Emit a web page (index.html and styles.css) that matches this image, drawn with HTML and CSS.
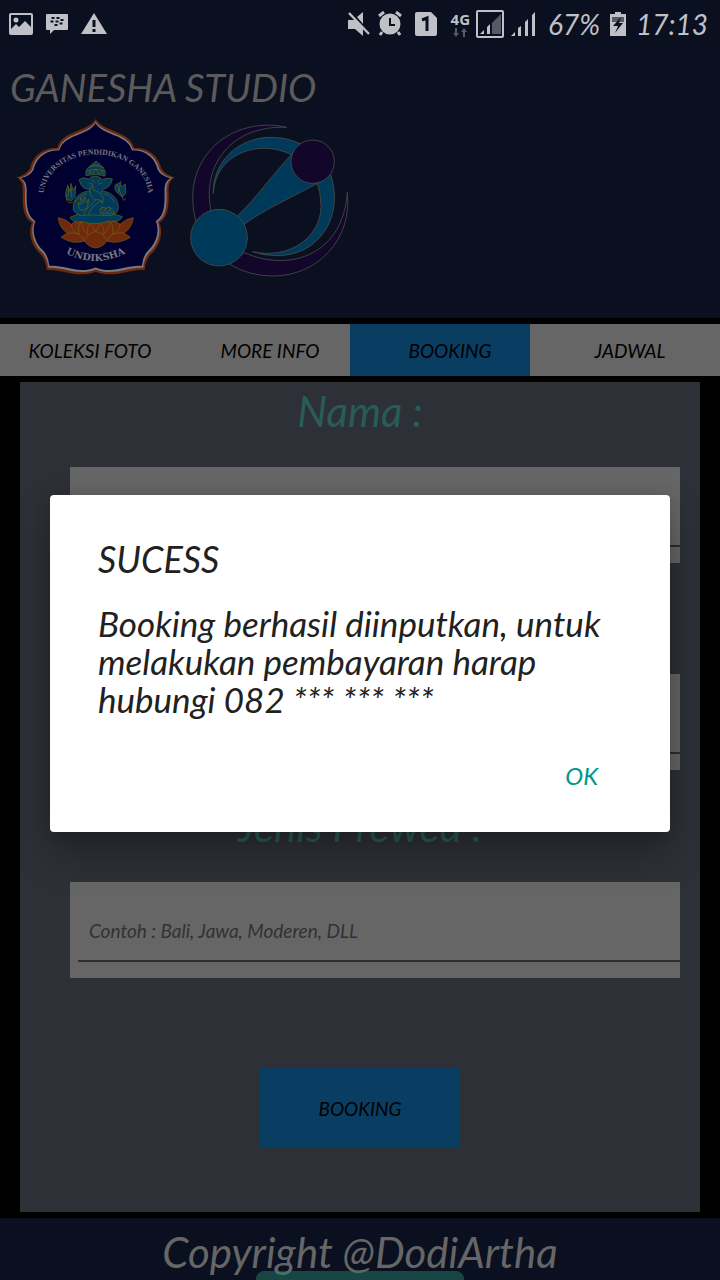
FILE: index.html
```html
<!DOCTYPE html>
<html lang="id">
<head>
<meta charset="utf-8">
<meta name="viewport" content="width=device-width, initial-scale=1">
<title>Ganesha Studio</title>
<link rel="stylesheet" href="styles.css">
</head>
<body>
<div class="app">
  <header class="header">
    <div class="status">
      <div class="status-group status-left">
        <svg width="24" height="24" viewBox="0 0 24 24"><path fill="currentColor" fill-rule="evenodd" d="M2 1H22Q24 1 24 3V21Q24 23 22 23H2Q0 23 0 21V3Q0 1 2 1ZM2 3V17L7 12L10 15L16 9L22 15V3ZM7 5.500A2.500 2.500 0 1 1 7 10.500A2.500 2.500 0 1 1 7 5.500Z"/></svg>
        <svg width="24" height="24" viewBox="0 0 24 24"><path fill="currentColor" d="M2 2H22Q23 2 23 3V17Q23 18 22 18H9L5 22V18H2Q1 18 1 17V3Q1 2 2 2Z"/><path stroke="#0a1020" stroke-width="2" d="M6.500 6H9.500M11.500 6H14.500M5.500 9.500H8.500M10.500 9.500H13.500M15.500 8H18.500M9.500 13H12.500M14.500 11.500H17.500"/></svg>
        <svg width="26" height="24" viewBox="0 0 26 24"><path fill="currentColor" d="M13 1L26 22H0Z"/><path stroke="#0a1020" stroke-width="3" d="M13 8V15M13 17V20"/></svg>
      </div>
      <div class="status-group">
        <svg width="24" height="24" viewBox="0 0 24 24"><path fill="currentColor" d="M1 8H8L16 15V24L8 17H1ZM10 5L16 0V12Z"/><path stroke="currentColor" stroke-width="2.400" d="M2 1L22 22"/></svg>
        <svg width="26" height="26" viewBox="0 0 26 26"><circle cx="13" cy="13" r="10.500" fill="currentColor"/><path stroke="currentColor" stroke-width="3" d="M2 5L7 1M24 5L19 1M5 21L3 24M21 21L23 24"/><path fill="none" stroke="#0a1020" stroke-width="2" d="M13 7V14H18"/></svg>
        <svg class="sim" width="22" height="24" viewBox="0 0 22 24"><path fill="currentColor" d="M2 0H16L22 6V22Q22 24 20 24H2Q0 24 0 22V2Q0 0 2 0Z"/><path fill="none" stroke="#0a1020" stroke-width="3" d="M7 8L12 6V19"/></svg>
        <div class="network"><span>4G</span><svg width="14" height="9" viewBox="0 0 14 9"><path fill="#555a66" d="M2 0H4V5H6L3 9L0 5H2ZM10 9H12V4H14L11 0L8 4H10Z"/></svg></div>
        <svg width="28" height="28" viewBox="0 0 28 28"><rect x="1" y="1" width="26" height="26" rx="1" fill="none" stroke="currentColor" stroke-width="2"/><path fill="#555a66" d="M16 13L25 4V24H16Z"/><path fill="currentColor" d="M4 24L8 20V24ZM11 17L14 14V24H11Z"/></svg>
        <svg width="26" height="26" viewBox="0 0 26 26"><path fill="currentColor" d="M1 25L5 21V25ZM8 17L11 15V25H8ZM15 11L18 8V25H15ZM22 4L25 1V25H22Z"/></svg>
        <span class="status-text battery-level">67%</span>
        <svg width="16" height="26" viewBox="0 0 16 26"><path fill="currentColor" d="M5 1H11V3H16V25H0V3H5Z"/><path fill="#555a66" d="M2 6H14V11H2Z"/><path fill="#0a1020" d="M11 6L3 15H8L5 22L13 12H9Z"/></svg>
        <time class="status-text clock">17:13</time>
      </div>
    </div>
    <h1 class="brand">GANESHA STUDIO</h1>
    <div class="logos">
      <svg width="170" height="175" viewBox="0 0 510 525" role="img" aria-label="Universitas Pendidikan Ganesha">
        <defs>
          <path id="rosette" d="M257 27C235 66 155 62 142 113C88 113 66 148 60 175Q50 194 20 202C42 215 38 237 38 260C38 310 48 325 66 338C54 365 62 400 84 425Q108 445 110 480C160 476 200 507 257 485C314 507 354 476 404 480Q406 445 430 425C452 400 460 365 448 338C466 325 476 310 476 260C476 237 472 215 494 202Q464 194 454 175C448 148 426 113 372 113C359 62 279 66 257 27Z"/>
          <path id="arc-top" d="M101 256A156 122 0 0 1 415 256"/>
          <path id="arc-bottom" d="M150 420Q257 486 364 420"/>
        </defs>
        <use href="#rosette" fill="#71290d"/>
        <use href="#rosette" fill="#77777c" transform="translate(8 8) scale(.97)"/>
        <use href="#rosette" fill="#000031" transform="translate(14 14) scale(.945)"/>
        <text class="seal-top"><textPath href="#arc-top" startOffset="50%" text-anchor="middle">UNIVERSITAS PENDIDIKAN GANESHA</textPath></text>
        <text class="seal-bottom"><textPath href="#arc-bottom" startOffset="50%" text-anchor="middle">UNDIKSHA</textPath></text>
        <g fill="#71290d" stroke="#666510" stroke-width="2">
          <path d="M144 323Q165 325 184 343Q200 328 214 336Q229 323 242 341L257 326L272 341Q285 323 300 336Q314 328 330 343Q349 325 370 323Q366 353 342 370Q353 375 361 382Q324 405 291 393Q278 411 257 414Q236 411 223 393Q190 405 153 382Q161 375 172 370Q148 353 144 323Z"/>
          <path fill="none" d="M172 370Q211 362 223 393Q235 366 257 365Q279 366 291 393Q303 362 342 370M184 343Q184 365 208 374Q201 345 214 336Q216 359 233 373Q230 345 242 341L257 365L272 341Q284 350 281 373Q298 359 300 336Q313 345 306 374Q330 365 330 343"/>
        </g>
        <g fill="#003b5c" stroke="#666510" stroke-width="2">
          <path d="M180 322Q215 306 257 309Q304 306 337 320Q331 337 298 333Q259 347 216 335Q188 340 180 322Z"/>
          <path d="M231 244C206 249 188 265 190 300Q203 322 231 315L287 316Q324 321 325 292C324 263 303 246 280 244Z"/>
          <path d="M236 207Q219 199 207 209Q215 240 239 238Q242 255 257 258Q273 255 278 239Q302 234 307 207Q291 202 277 209Q255 188 236 207Z"/>
          <path d="M228 197Q225 179 237 171L245 164L258 153L271 164L280 173Q289 186 285 198Q256 189 228 197Z"/>
          <path fill="none" d="M229 184Q257 172 285 184M237 172Q257 163 280 173M246 165H270M237 194L240 182L247 192L257 177L267 192L276 182L280 194M237 220L249 223M264 223L277 219M245 210L253 216M261 216L269 209"/>
          <path d="M249 227C246 249 263 239 274 254Q284 266 278 280Q269 264 257 270C239 262 236 242 243 229Z"/>
          <path fill="none" d="M231 250Q208 258 195 275M257 270Q234 288 220 313M276 272Q248 282 235 313M280 250Q302 254 312 276"/>
          <path d="M207 294L205 277L214 283L212 263L221 278L223 259L230 278L237 268L231 294L214 302ZM167 249L173 225L180 244L183 220L190 242L197 227L195 261L184 273L170 267ZM315 226L329 218L335 230L346 222L347 250L338 261L323 250L315 239Z"/>
          <path d="M270 297Q280 288 288 298Q297 285 306 299Q313 302 311 311H273Z"/>
          <path fill="none" d="M167 254Q169 286 189 277M175 232V259M184 233V262M319 221L341 271L348 266M333 213L325 247M276 300V289M287 300V290M300 300V290M278 309L284 300L292 309L300 300L307 309"/>
        </g>
      </svg>
      <svg width="180" height="175" viewBox="0 0 540 525" role="img" aria-label="Ganesha Studio">
        <g stroke="#4b4a49" stroke-width="2.500">
          <g fill="#12072b">
            <path d="M320 52C180 20 38 110 38 265Q38 302 48 338L93 302C65 170 150 45 320 52Z"/>
            <path d="M502 247C518 390 410 498 280 498Q205 498 148 462L193 428C335 490 490 430 502 247Z"/>
          </g>
          <g fill="#003a5a">
            <path d="M100 250C97 165 165 82 275 82Q320 82 362 102L333 133C230 85 105 135 100 250Z"/>
            <path d="M452 195C492 310 425 437 290 437Q250 437 218 425C330 450 422 380 423 290Q423 250 412 220Z"/>
            <path d="M172 318C220 275 285 185 335 133L412 220C325 268 245 302 193 343Z"/>
            <circle cx="117" cy="383" r="85"/>
          </g>
          <circle cx="398" cy="155" r="65" fill="#12072b"/>
        </g>
      </svg>
    </div>
  </header>

  <nav class="tabs">
    <a class="tab" href="#koleksi">KOLEKSI FOTO</a>
    <a class="tab" href="#info">MORE INFO</a>
    <a class="tab tab-active" href="#booking" aria-current="page">BOOKING</a>
    <a class="tab" href="#jadwal">JADWAL</a>
  </nav>

  <main class="panel" id="booking">
    <form class="form">
      <label class="label" for="nama">Nama :</label>
      <div class="field"><input class="input" id="nama" type="text"></div>
      <div class="field field-spaced"><input class="input" id="kontak" type="text" aria-label="Kontak"></div>
      <label class="label" for="jenis">Jenis Prewed :</label>
      <div class="field"><input class="input" id="jenis" type="text" placeholder="Contoh : Bali, Jawa, Moderen, DLL"></div>
      <button class="submit" type="button">BOOKING</button>
    </form>
  </main>

  <footer class="footer">
    <p class="copyright">Copyright @DodiArtha</p>
    <div class="toast"></div>
  </footer>

  <div class="overlay">
    <section class="dialog" role="alertdialog" aria-labelledby="dialog-title" aria-describedby="dialog-message">
      <h2 class="dialog-title" id="dialog-title">SUCESS</h2>
      <p class="dialog-message" id="dialog-message">Booking berhasil diinputkan, untuk melakukan pembayaran harap hubungi 082 *** *** ***</p>
      <div class="dialog-actions"><button class="dialog-button" type="button">OK</button></div>
    </section>
  </div>
</div>
</body>
</html>
```
FILE: styles.css
```css
* {
  box-sizing: border-box;
}

body {
  margin: 0;
  background: #000;
  font-family: Lato, "Open Sans", sans-serif;
  font-style: italic;
}

h1, h2, p {
  margin: 0;
  font-weight: 400;
}

svg {
  display: block;
  flex: none;
}

button, input {
  font: inherit;
}

.app {
  position: relative;
  display: flex;
  flex-direction: column;
  gap: 6px;
  min-height: 100vh;
  overflow: hidden;
}

.header {
  padding-bottom: 33px;
  background: #0a1020;
}

.status {
  display: flex;
  justify-content: space-between;
  align-items: center;
  height: 48px;
  padding: 0 12px 0 9px;
  color: #c0c1c7;
}

.status-group {
  display: flex;
  align-items: center;
  gap: 6px;
}

.status-left {
  gap: 12px;
}

.sim {
  margin: 0 8px 0 6px;
}

.network {
  display: flex;
  flex-direction: column;
  align-items: center;
  gap: 2px;
  font: 700 15px/14px "Noto Sans", sans-serif;
}

.status-text {
  font-size: 28px;
  line-height: 32px;
}

.battery-level {
  margin: 0 4px 0 6px;
}

.clock {
  margin-left: 4px;
}

.brand {
  padding: 16px 10px 0;
  color: #5c5b5c;
  font-size: 38px;
  line-height: 46px;
}

.logos {
  display: flex;
  padding-left: 10px;
}

.seal-top, .seal-bottom {
  fill: #77777c;
  font-style: normal;
  font-weight: 700;
}

.seal-top {
  font-family: "Liberation Serif", serif;
  font-size: 23px;
}

.seal-bottom {
  font-family: "DejaVu Serif", serif;
  font-size: 29px;
}

.tabs {
  display: grid;
  grid-template-columns: repeat(4, 1fr);
  height: 52px;
  background: #666;
}

.tab {
  display: flex;
  align-items: center;
  justify-content: center;
  color: #000;
  font-size: 19px;
  text-decoration: none;
}

.tab-active {
  margin: 0 10px 0 -10px;
  padding-left: 20px;
  background: #0a3d62;
}

.panel {
  flex: 1;
  margin: 0 20px;
  padding-bottom: 64px;
  background: #2e3038;
}

.form {
  display: flex;
  flex-direction: column;
}

.label {
  height: 85px;
  color: #285c57;
  font-size: 42px;
  line-height: 58px;
  text-align: center;
}

.field {
  margin: 0 20px 26px 50px;
  padding: 0 0 16px 8px;
  background: #666;
}

.field-spaced {
  margin-top: 85px;
  margin-bottom: 27px;
}

.input {
  display: block;
  width: 100%;
  height: 80px;
  padding: 18px 11px 0;
  border: 0;
  border-bottom: 2px solid #2e2e2e;
  border-radius: 0;
  outline: 0;
  background: transparent;
  color: #000;
  font-size: 19px;
}

.input::placeholder {
  color: #323232;
  opacity: 1;
}

.submit {
  align-self: center;
  width: 200px;
  height: 80px;
  margin-top: 64px;
  border: 0;
  background: #0a3d62;
  color: #000;
  font-size: 19px;
}

.footer {
  position: relative;
  height: 62px;
  padding-top: 8px;
  background: #0a1020;
  overflow: hidden;
}

.copyright {
  color: #666;
  font-size: 42px;
  line-height: 52px;
  text-align: center;
}

.toast {
  position: absolute;
  bottom: 0;
  left: 50%;
  width: 208px;
  height: 9px;
  border-radius: 8px 8px 0 0;
  background: rgba(36, 124, 103, 0.5);
  transform: translateX(-50%);
}

.overlay {
  position: absolute;
  inset: 0;
  display: flex;
  align-items: center;
  justify-content: center;
  padding: 46px 50px 0;
}

.dialog {
  width: 100%;
  padding: 41px 48px 24px;
  border-radius: 4px;
  background: #fff;
  box-shadow: 0 20px 40px rgba(0, 0, 0, 0.3), 0 0 16px rgba(0, 0, 0, 0.1);
  color: #212121;
}

.dialog-title {
  font-size: 36px;
  line-height: 46px;
}

.dialog-message {
  margin-top: 22px;
  font-size: 35px;
  line-height: 38px;
}

.dialog-actions {
  display: flex;
  justify-content: flex-end;
  margin-top: 26px;
}

.dialog-button {
  height: 64px;
  padding: 0 24px;
  border: 0;
  background: transparent;
  color: #009688;
  font-size: 24px;
}
```
